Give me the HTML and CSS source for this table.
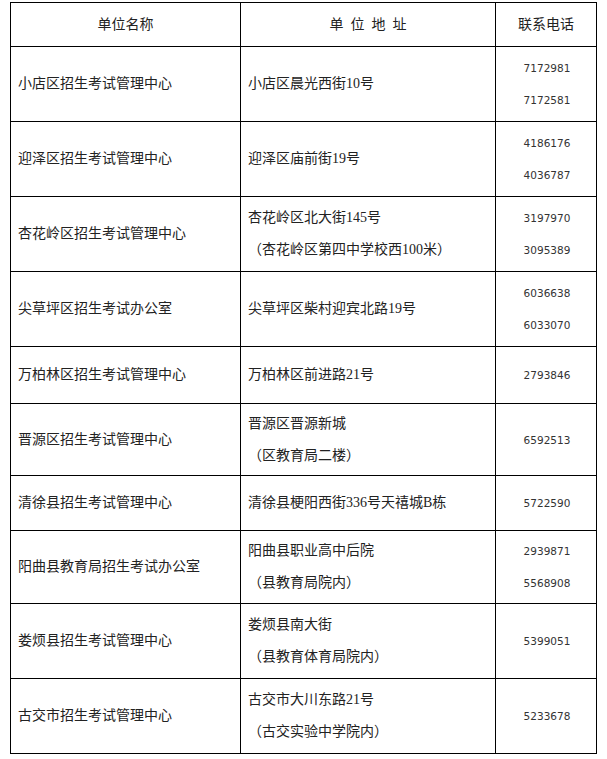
FILE: index.html
```html
<!DOCTYPE html>
<html lang="zh-CN">
<head>
<meta charset="utf-8">
<title>招生考试机构联系方式</title>
<link rel="stylesheet" href="styles.css">
</head>
<body>
<div class="page">
<table class="directory">
  <colgroup>
    <col class="col-name">
    <col class="col-addr">
    <col class="col-phone">
  </colgroup>
  <thead>
    <tr class="r-head">
      <th>单位名称</th>
      <th class="spaced">单 位 地 址</th>
      <th>联系电话</th>
    </tr>
  </thead>
  <tbody>
    <tr class="r75">
      <td>小店区招生考试管理中心</td>
      <td>小店区晨光西街10号</td>
      <td class="phone">7172981<br>7172581</td>
    </tr>
    <tr class="r75">
      <td>迎泽区招生考试管理中心</td>
      <td>迎泽区庙前街19号</td>
      <td class="phone">4186176<br>4036787</td>
    </tr>
    <tr class="r75">
      <td>杏花岭区招生考试管理中心</td>
      <td>杏花岭区北大街145号<br>（杏花岭区第四中学校西100米）</td>
      <td class="phone">3197970<br>3095389</td>
    </tr>
    <tr class="r75">
      <td>尖草坪区招生考试办公室</td>
      <td>尖草坪区柴村迎宾北路19号</td>
      <td class="phone">6036638<br>6033070</td>
    </tr>
    <tr class="r57">
      <td>万柏林区招生考试管理中心</td>
      <td>万柏林区前进路21号</td>
      <td class="phone">2793846</td>
    </tr>
    <tr class="r72">
      <td>晋源区招生考试管理中心</td>
      <td>晋源区晋源新城<br>（区教育局二楼）</td>
      <td class="phone">6592513</td>
    </tr>
    <tr class="r55">
      <td>清徐县招生考试管理中心</td>
      <td>清徐县梗阳西街336号天禧城B栋</td>
      <td class="phone">5722590</td>
    </tr>
    <tr class="r73">
      <td>阳曲县教育局招生考试办公室</td>
      <td>阳曲县职业高中后院<br>（县教育局院内）</td>
      <td class="phone">2939871<br>5568908</td>
    </tr>
    <tr class="r75">
      <td>娄烦县招生考试管理中心</td>
      <td>娄烦县南大街<br>（县教育体育局院内）</td>
      <td class="phone">5399051</td>
    </tr>
    <tr class="r75">
      <td>古交市招生考试管理中心</td>
      <td>古交市大川东路21号<br>（古交实验中学院内）</td>
      <td class="phone">5233678</td>
    </tr>
  </tbody>
</table>
</div>
</body>
</html>
```

FILE: styles.css
```css
html, body {
  margin: 0;
  padding: 0;
  background: #ffffff;
}

.page {
  padding: 2px 0 0 10px;
}

.directory {
  border-collapse: collapse;
  table-layout: fixed;
  width: 587px;
  font-family: "Liberation Serif", "Noto Sans CJK SC", serif;
  font-size: 14px;
  color: #222222;
}

.col-name { width: 230px; }
.col-addr { width: 255px; }
.col-phone { width: 101px; }

.directory th,
.directory td {
  border: 1px solid #000000;
  padding: 0 0 0 7px;
  line-height: 32px;
  vertical-align: middle;
  text-align: left;
  white-space: nowrap;
  font-weight: normal;
}

.directory th {
  text-align: center;
  padding: 0;
}

.directory th.spaced {
  word-spacing: 3.5px;
}

.directory td.phone {
  text-align: center;
  padding: 0 0 0 2px;
  font-family: "DejaVu Sans", sans-serif;
  font-size: 10.5px;
  color: #333333;
}

.r-head { height: 44px; }
.r75 { height: 75px; }
.r72 { height: 72px; }
.r73 { height: 73px; }
.r57 { height: 57px; }
.r55 { height: 55px; }
```
